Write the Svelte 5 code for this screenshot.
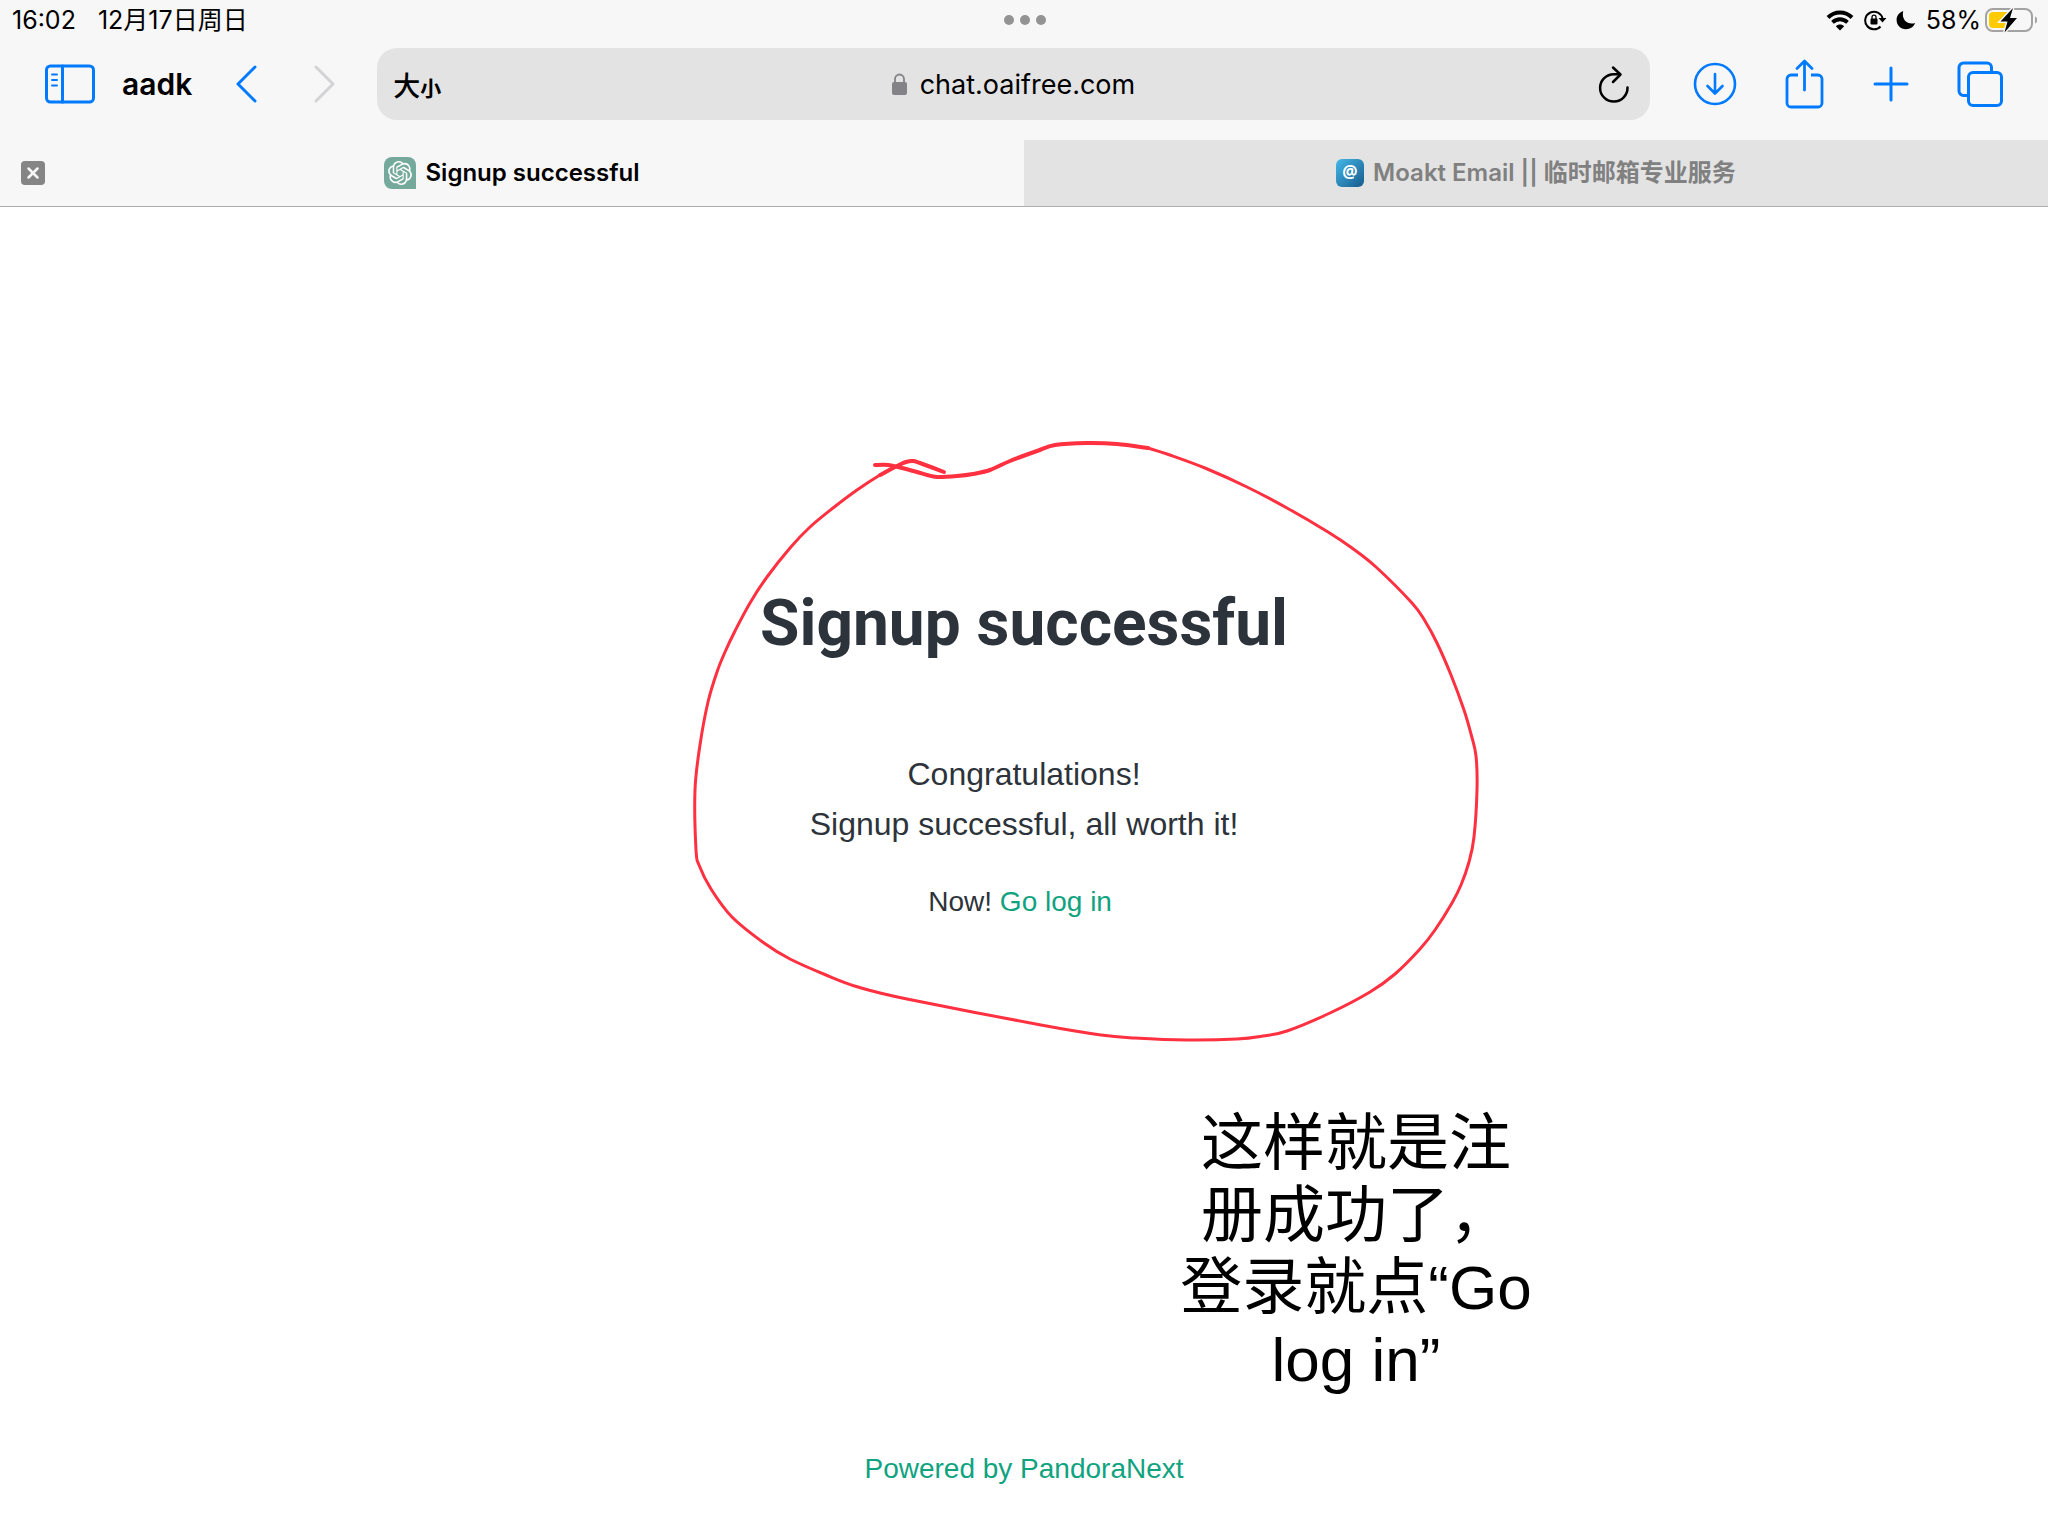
<script>
    let address = 'chat.oaifree.com';

    // hand-drawn marker points
    const thick = [
        [875, 465], [888, 465], [898, 467], [917, 472], [927, 475], [937, 477], [957, 476],
        [973, 474], [990, 470], [1010, 461], [1037, 451], [1055, 445], [1087, 443], [1117, 444],
        [1148, 448]
    ];
    const thin = [
        [1148, 448], [1170, 455], [1205, 468], [1247, 487], [1287, 508], [1328, 532], [1352, 548],
        [1376, 567], [1412, 603], [1425, 621], [1437, 643], [1451, 675], [1464, 710], [1471, 734],
        [1476, 756], [1477, 790], [1474, 837], [1469, 862], [1461, 885], [1452, 903], [1435, 930],
        [1420, 949], [1395, 974], [1370, 992], [1330, 1013], [1287, 1031], [1263, 1036],
        [1237, 1039], [1187, 1040], [1135, 1038], [1101, 1035], [1041, 1025], [907, 999],
        [858, 987], [826, 975], [790, 959], [764, 943], [732, 917], [711, 889], [699, 865],
        [696, 850], [695, 790], [700, 745], [708, 702], [717, 672], [725, 652], [735, 631],
        [750, 603], [767, 577], [790, 548], [810, 527], [833, 508], [857, 490], [880, 475],
        [897, 466]
    ];
    const tail = [[880, 475], [897, 466], [906, 462], [913, 461], [920, 463], [944, 472]];

    // Catmull-Rom spline through the points
    function smooth(points) {
        let d = `M${points[0][0]} ${points[0][1]}`;
        for (let i = 0; i < points.length - 1; i++) {
            const p0 = points[i - 1] || points[i];
            const p1 = points[i];
            const p2 = points[i + 1];
            const p3 = points[i + 2] || p2;
            d += ` C${p1[0] + (p2[0] - p0[0]) / 6} ${p1[1] + (p2[1] - p0[1]) / 6}`;
            d += ` ${p2[0] - (p3[0] - p1[0]) / 6} ${p2[1] - (p3[1] - p1[1]) / 6} ${p2[0]} ${p2[1]}`;
        }
        return d;
    }
</script>

<div class="screen">
    <header>
        <div class="status">
            <div class="status-side">
                <span>16:02</span>
                <span>12月17日周日</span>
            </div>
            <button class="dots" aria-label="多任务">
                <span></span><span></span><span></span>
            </button>
            <div class="status-side right">
                <svg width="28" height="22" viewBox="0 0 28 22" fill="none" stroke="#000">
                    <path d="M2 8.5C8.700 1.800 19.300 1.800 26 8.500" stroke-width="4" />
                    <path d="M6.500 13.300C10.800 9.200 17.200 9.200 21.500 13.300" stroke-width="3.800" />
                    <path d="M9.800 17.200C12.200 15 15.800 15 18.200 17.200L14 21.400Z" fill="#000" stroke="none" />
                </svg>
                <svg width="22" height="22" viewBox="0 0 22 22" fill="none" stroke="#000">
                    <path d="M16.500 17.500A8.800 8.800 0 1 1 18.600 9.500" stroke-width="2" />
                    <path d="M14.500 9H22.500L18.500 13.500Z" fill="#000" stroke="none" />
                    <rect x="6.500" y="9.500" width="7" height="6" rx="1" fill="#000" stroke="none" />
                    <path d="M8 10V8.200a2 2 0 0 1 4 0V10" stroke-width="1.300" />
                </svg>
                <svg width="20" height="20" viewBox="0 0 20 20">
                    <path d="M7.200 1C3 2.500 .6 6 .6 10C.6 15.300 4.700 19.200 9.800 19.200C14.200 19.200 17.800 16.800 19.200 13C13 15.200 5 11 7.200 1Z" />
                </svg>
                <span>58%</span>
                <svg class="battery" width="52" height="26" viewBox="0 0 52 26">
                    <rect x="1" y="2" width="46" height="22" rx="7" fill="none" stroke="#a3a3a3" stroke-width="2" />
                    <path d="M50 9.500c3 1 3 6 0 7z" fill="#a3a3a3" />
                    <path d="M8 5H26V21H8a4 4 0 0 1-4-4V9a4 4 0 0 1 4-4Z" fill="#fecb00" />
                    <path d="M28 1L15.500 14.500H22.500L19.500 25.500L32 11H25Z" stroke="#f7f7f7" stroke-width="3" paint-order="stroke" />
                </svg>
            </div>
        </div>

        <div class="toolbar">
            <button aria-label="边栏">
                <svg width="52" height="42" viewBox="0 0 52 42" fill="none" stroke="#007aff" stroke-width="3" stroke-linecap="round">
                    <rect x="2.500" y="3" width="47" height="36" rx="4" />
                    <path d="M18.500 3V39" />
                    <path d="M8 11.500H13M8 17H13M8 22.500H13" stroke-width="2" />
                </svg>
            </button>
            <button class="profile">aadk</button>
            <button aria-label="后退">
                <svg width="24" height="40" viewBox="0 0 24 40" fill="none" stroke="#007aff" stroke-width="3" stroke-linecap="round" stroke-linejoin="round">
                    <path d="M20 3L3 20L20 37" />
                </svg>
            </button>
            <button class="forward" aria-label="前进" disabled>
                <svg width="24" height="40" viewBox="0 0 24 40" fill="none" stroke="#d3d3d5" stroke-width="3" stroke-linecap="round" stroke-linejoin="round">
                    <path d="M4 3L21 20L4 37" />
                </svg>
            </button>
            <div class="address">
                <button class="text-size" aria-label="文字大小">大<small>小</small></button>
                <label class="url">
                    <svg width="16" height="22" viewBox="0 0 16 22">
                        <rect x="0" y="9" width="15" height="13" rx="2" fill="#838287" />
                        <path d="M3 10V6a4.500 4.500 0 0 1 9 0v4" fill="none" stroke="#838287" stroke-width="1.800" />
                    </svg>
                    <input type="text" aria-label="网址" bind:value={address}>
                </label>
                <button class="reload" aria-label="重新载入">
                    <svg width="36" height="38" viewBox="0 0 36 38" fill="none" stroke="#000" stroke-width="2.500" stroke-linecap="round" stroke-linejoin="round">
                        <path d="M29.500 22.500A13.700 13.700 0 1 1 16 9.200H22" />
                        <path d="M15 2.500L22.500 9.500L15 17" />
                    </svg>
                </button>
            </div>
            <div class="actions">
                <button aria-label="下载">
                    <svg width="44" height="44" viewBox="0 0 44 44" fill="none" stroke="#007aff" stroke-width="2.600" stroke-linecap="round" stroke-linejoin="round">
                        <circle cx="22" cy="22" r="20" />
                        <path d="M22 12V31M14.500 24L22 31.500L29.500 24" />
                    </svg>
                </button>
                <button aria-label="共享">
                    <svg width="40" height="50" viewBox="0 0 40 50" fill="none" stroke="#007aff" stroke-width="2.800" stroke-linecap="round" stroke-linejoin="round">
                        <path d="M13 16H6a4 4 0 0 0-4 4V44a4 4 0 0 0 4 4H33a4 4 0 0 0 4-4V20a4 4 0 0 0-4-4H26" stroke-linecap="butt" />
                        <path d="M19.500 31V2.500M12 9.500L19.500 2L27 9.500" />
                    </svg>
                </button>
                <button aria-label="新标签页">
                    <svg width="36" height="36" viewBox="0 0 36 36" fill="none" stroke="#007aff" stroke-width="3" stroke-linecap="round">
                        <path d="M18 2V34M2 18H34" />
                    </svg>
                </button>
                <button aria-label="标签页概览">
                    <svg width="46" height="46" viewBox="0 0 46 46" fill="none" stroke="#007aff" stroke-width="3">
                        <path d="M11.500 34.500H6.500a4.500 4.500 0 0 1-4.500-4.500V6.500A4.500 4.500 0 0 1 6.500 2H30a4.500 4.500 0 0 1 4.500 4.500V11.500" />
                        <rect x="11.500" y="11.500" width="33" height="33" rx="4.500" />
                    </svg>
                </button>
            </div>
        </div>

        <nav class="tabs">
            <div class="tab active">
                <button class="close" aria-label="关闭标签页">
                    <svg width="24" height="24" viewBox="0 0 24 24">
                        <rect width="24" height="24" rx="4" fill="#858585" />
                        <path d="M7.500 7.500L16.500 16.500M16.500 7.500L7.500 16.500" stroke="#f7f7f7" stroke-width="2.500" stroke-linecap="round" />
                    </svg>
                </button>
                <button class="tab-title">
                    <svg width="32" height="32" viewBox="0 0 32 32">
                        <path d="M8 0H24a8 8 0 0 1 8 8V32H8a8 8 0 0 1-8-8V8a8 8 0 0 1 8-8Z" fill="#74a99b" />
                        <g transform="translate(4 4)">
                            <path fill="#fff" d="M22.2819 9.8211a5.9847 5.9847 0 0 0-.5157-4.9108 6.0462 6.0462 0 0 0-6.5098-2.9A6.0651 6.0651 0 0 0 4.9807 4.1818a5.9847 5.9847 0 0 0-3.9977 2.9 6.0462 6.0462 0 0 0 .7427 7.0966 5.98 5.98 0 0 0 .511 4.9107 6.051 6.051 0 0 0 6.5146 2.9001A5.9847 5.9847 0 0 0 13.2599 24a6.0557 6.0557 0 0 0 5.7718-4.2058 5.9894 5.9894 0 0 0 3.9977-2.9001 6.0557 6.0557 0 0 0-.7475-7.0729zm-9.022 12.6081a4.4755 4.4755 0 0 1-2.8764-1.0408l.1419-.0804 4.7783-2.7582a.7948.7948 0 0 0 .3927-.6813v-6.7369l2.02 1.1686a.071.071 0 0 1 .038.052v5.5826a4.504 4.504 0 0 1-4.4945 4.4944zm-9.6607-4.1254a4.4708 4.4708 0 0 1-.5346-3.0137l.142.0852 4.783 2.7582a.7712.7712 0 0 0 .7806 0l5.8428-3.3685v2.3324a.0804.0804 0 0 1-.0332.0615L9.74 19.9502a4.4992 4.4992 0 0 1-6.1408-1.6464zM2.3408 7.8956a4.485 4.485 0 0 1 2.3655-1.9728V11.6a.7664.7664 0 0 0 .3879.6765l5.8144 3.3543-2.0201 1.1685a.0757.0757 0 0 1-.071 0l-4.8303-2.7865A4.504 4.504 0 0 1 2.3408 7.872zm16.5963 3.8558L13.1038 8.364 15.1192 7.2a.0757.0757 0 0 1 .071 0l4.8303 2.7913a4.4944 4.4944 0 0 1-.6765 8.1042v-5.6772a.79.79 0 0 0-.407-.667zm2.0107-3.0231l-.142-.0852-4.7735-2.7818a.7759.7759 0 0 0-.7854 0L9.409 9.2297V6.8974a.0662.0662 0 0 1 .0284-.0615l4.8303-2.7866a4.4992 4.4992 0 0 1 6.6802 4.66zM8.3065 12.863l-2.02-1.1638a.0804.0804 0 0 1-.038-.0567V6.0742a4.4992 4.4992 0 0 1 7.3757-3.4537l-.142.0805L8.704 5.459a.7948.7948 0 0 0-.3927.6813zm1.0976-2.3654l2.602-1.4998 2.6069 1.4998v2.9994l-2.5974 1.4997-2.6067-1.4997Z" />
                        </g>
                    </svg>
                    Signup successful
                </button>
            </div>
            <div class="tab">
                <button class="tab-title">
                    <svg width="28" height="28" viewBox="0 0 28 28">
                        <defs>
                            <linearGradient id="moakt" x1="0" y1="0" x2="1" y2="1">
                                <stop offset="0" stop-color="#45b8e8" />
                                <stop offset="1" stop-color="#155a8c" />
                            </linearGradient>
                        </defs>
                        <rect width="28" height="28" rx="6" fill="url(#moakt)" />
                        <text class="at" x="14" y="19" text-anchor="middle">@</text>
                    </svg>
                    Moakt Email || 临时邮箱专业服务
                </button>
            </div>
        </nav>
    </header>

    <main>
        <h1>Signup successful</h1>
        <p class="message">Congratulations!<br>Signup successful, all worth it!</p>
        <p class="login">Now! <a href="#login">Go log in</a>&nbsp;</p>
    </main>

    <footer>
        <a href="#pandora">Powered by PandoraNext</a>
    </footer>

    <svg class="marker" width="802" height="620" viewBox="685 430 802 620">
        <path d={smooth(thick)} stroke-width="4" />
        <path d={smooth(thin)} stroke-width="3" />
        <path d={smooth(tail)} stroke-width="4" />
    </svg>
    <div class="note">这样就是注<br>册成功了，<br>登录就点“Go<br>log in”</div>
</div>

<style>
    :global(body) {
        margin: 0;
        background: #fff;
    }

    .screen {
        position: relative;
        display: flex;
        flex-direction: column;
        min-height: 100vh;
        overflow: hidden;
        font-family: Inter, "Noto Sans CJK SC", sans-serif;
        color: #000;
    }

    button {
        padding: 0;
        border: 0;
        background: none;
        font: inherit;
        color: inherit;
    }

    svg {
        display: block;
        flex: none;
    }

    header {
        background: #f7f7f7;
        border-bottom: 1px solid #acacac;
    }

    .status {
        display: flex;
        align-items: center;
        height: 40px;
        padding: 0 11px 0 12px;
        font-size: 25px;
        line-height: 40px;
    }

    .status-side {
        display: flex;
        flex: 1;
        align-items: center;
        gap: 22px;
    }

    .right {
        justify-content: flex-end;
        gap: 10px;
    }

    .battery {
        margin-left: -6px;
    }

    .dots {
        display: flex;
        gap: 6px;
    }

    .dots span {
        width: 10px;
        height: 10px;
        border-radius: 50%;
        background: #939393;
    }

    .toolbar {
        display: flex;
        align-items: center;
        padding: 8px 45px 20px 44px;
    }

    .profile {
        margin: 0 43px 0 26px;
        font-size: 30px;
        font-weight: 600;
    }

    .forward {
        margin: 0 41px 0 53px;
    }

    .address {
        display: grid;
        grid-template-columns: 1fr auto 1fr;
        align-items: center;
        flex: 1;
        height: 72px;
        padding: 0 16px;
        box-sizing: border-box;
        border-radius: 20px;
        background: #e3e3e3;
        font-size: 27px;
    }

    .text-size {
        justify-self: start;
        font-weight: 500;
    }

    small {
        font-size: 21px;
        font-weight: 700;
    }

    .url {
        display: flex;
        align-items: center;
        gap: 12px;
    }

    input {
        width: 216px;
        field-sizing: content;
        padding: 0;
        border: 0;
        outline: 0;
        background: none;
        font: inherit;
        color: inherit;
    }

    .reload {
        justify-self: end;
    }

    .actions {
        display: flex;
        align-items: center;
        gap: 48px;
        margin-left: 43px;
    }

    .tabs {
        display: flex;
    }

    .tab {
        position: relative;
        display: flex;
        flex: 1;
        align-items: center;
        justify-content: center;
        height: 66px;
        background: #e3e3e3;
        color: #808080;
    }

    .active {
        background: none;
        color: #000;
    }

    .close {
        position: absolute;
        left: 21px;
    }

    .tab-title {
        display: flex;
        align-items: center;
        gap: 9px;
        font-size: 24px;
        font-weight: 600;
        line-height: 32px;
    }

    .at {
        font: bold 17px "Noto Sans", sans-serif;
        fill: #fff;
    }

    main {
        flex: 1;
        padding-top: 377px;
        font-family: "Liberation Sans", sans-serif;
        text-align: center;
        color: #2d333a;
    }

    h1 {
        margin: 0;
        font-family: Roboto, sans-serif;
        font-size: 64px;
        line-height: 80px;
    }

    p {
        margin: 0;
    }

    .message {
        margin-top: 85px;
        font-size: 32px;
        line-height: 50px;
    }

    .login {
        margin-top: 33px;
        font-size: 28px;
        line-height: 40px;
    }

    a {
        color: #10a37f;
        text-decoration: none;
    }

    footer {
        padding-bottom: 47px;
        font-family: "Liberation Sans", sans-serif;
        font-size: 28px;
        line-height: 40px;
        text-align: center;
    }

    /* annotations drawn over the page */
    .marker {
        position: absolute;
        top: 430px;
        left: calc(50% - 339px);
        fill: none;
        stroke: #ff3040;
        stroke-linecap: round;
        stroke-linejoin: round;
        pointer-events: none;
    }

    .note {
        position: absolute;
        top: 1108px;
        left: calc(50% + 132px);
        width: 400px;
        font-family: "Liberation Sans", "Noto Sans CJK SC", sans-serif;
        font-size: 62px;
        line-height: 72px;
        text-align: center;
    }
</style>
